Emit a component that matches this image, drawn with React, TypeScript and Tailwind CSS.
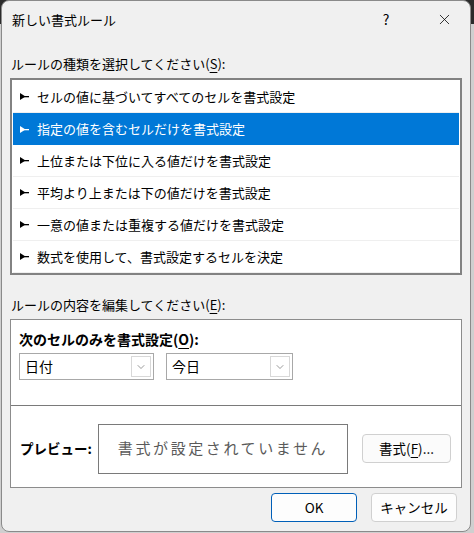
import { ChevronDown, X } from 'lucide-react'

const rules = [
  'セルの値に基づいてすべてのセルを書式設定',
  '指定の値を含むセルだけを書式設定',
  '上位または下位に入る値だけを書式設定',
  '平均より上または下の値だけを書式設定',
  '一意の値または重複する値だけを書式設定',
  '数式を使用して、書式設定するセルを決定',
]

const font = 'font-["Noto_Sans_CJK_JP","Noto_Sans",sans-serif]'

function RuleMarker({ active }: { active: boolean }) {
  const fill = active ? '#ffffff' : '#000000'
  return (
    <svg width="9" height="7" viewBox="0 0 9 7" className="shrink-0">
      <polygon points="0,0 0,7 5.5,3.5" fill={fill} />
      <rect x="3" y="3" width="6" height="1.3" fill={fill} />
    </svg>
  )
}

function Combo({ value, width }: { value: string; width: string }) {
  return (
    <div className={`flex h-[27px] items-center justify-between border border-[#a8a8a8] bg-white pl-[5px] pr-[2px] ${width}`}>
      <span className="text-[14px] text-black">{value}</span>
      <span className="flex h-[21px] w-[20px] items-center justify-center border border-[#d8d8d8] bg-white">
        <ChevronDown size={12} strokeWidth={1.2} className="text-[#555]" />
      </span>
    </div>
  )
}

function Underlined({ ch }: { ch: string }) {
  return <span className="underline underline-offset-[3px]">{ch}</span>
}

export default function App() {
  return (
    <div className={`h-[533px] w-[474px] bg-[linear-gradient(#2b2b2b_0,#2b2b2b_24px,#cfcfcf_24px)] ${font}`}>
      <div className="ml-[1px] flex h-[532px] w-[470px] flex-col rounded-[8px] border border-[#8a8a8a] bg-[#f0f0f0]">
        {/* title bar */}
        <div className="flex h-[37px] items-center pl-[10px]">
          <span className="flex-1 text-[13px] text-black">新しい書式ルール</span>
          <span className="w-[20px] text-center text-[14px] text-black">?</span>
          <span className="flex w-[74px] justify-center pl-[22px]">
            <X size={17} strokeWidth={1.1} className="text-black" />
          </span>
        </div>

        <div className="flex flex-1 flex-col px-[8px]">
          <div className="mt-[16px] h-[20px] pl-[1px] text-[13px] leading-[20px] text-black">
            ルールの種類を選択してください(<Underlined ch="S" />):
          </div>

          {/* rule type list */}
          <div className="mt-[4px] h-[197px] border-2 border-[#828282] bg-white px-[1px] pt-[1px]">
            {rules.map((r, i) => {
              const active = i === 1
              return (
                <div
                  key={r}
                  className={`flex h-[32px] items-center gap-[8px] pl-[7px] text-[13px] ${
                    active ? 'bg-[#0078d7] text-white' : 'border-b border-[#efefef] text-black'
                  }`}
                >
                  <RuleMarker active={active} />
                  <span>{r}</span>
                </div>
              )
            })}
          </div>

          <div className="mt-[20px] h-[20px] pl-[1px] text-[13px] leading-[20px] text-black">
            ルールの内容を編集してください(<Underlined ch="E" />):
          </div>

          {/* rule description panel */}
          <div className="mt-[4px] flex h-[169px] flex-col border border-[#8c8c8c] bg-white">
            <div className="flex h-[86px] flex-col border-b border-[#7a7a7a] px-[8px]">
              <div className="mt-[9px] text-[14px] font-bold leading-[20px] text-black">
                次のセルのみを書式設定(<Underlined ch="O" />):
              </div>
              <div className="mt-[4px] flex gap-[12px]">
                <Combo value="日付" width="w-[135px]" />
                <Combo value="今日" width="w-[127px]" />
              </div>
            </div>
            <div className="flex flex-1 items-center px-[9px] pt-[4px]">
              <span className="w-[78px] text-[13.5px] font-bold text-black">プレビュー:</span>
              <div className="flex h-[50px] w-[250px] items-center justify-center border border-[#7a7a7a] bg-white">
                <span className="text-[15px] tracking-[2.6px] text-[#5a5a5a]">書式が設定されていません</span>
              </div>
              <button className="ml-[14px] flex h-[29px] w-[89px] items-center justify-center rounded-[4px] border border-[#d0d0d0] bg-[#fbfbfb] text-[13.5px] text-black">
                書式(<Underlined ch="F" />)...
              </button>
            </div>
          </div>

          {/* dialog buttons */}
          <div className="mt-[5px] flex justify-end gap-[14px] pr-[5px]">
            <button className="flex h-[29px] w-[86px] items-center justify-center rounded-[4px] border border-[#005fb8] bg-[#fdfdfd] text-[13.5px] text-black">
              OK
            </button>
            <button className="flex h-[29px] w-[86px] items-center justify-center rounded-[4px] border border-[#d0d0d0] bg-[#fdfdfd] text-[13.5px] text-black">
              キャンセル
            </button>
          </div>
        </div>
      </div>
    </div>
  )
}
